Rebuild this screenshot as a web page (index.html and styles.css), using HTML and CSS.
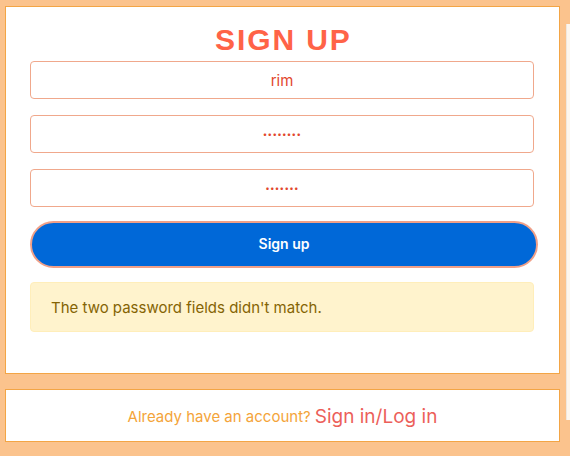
FILE: index.html
```html
<!DOCTYPE html>
<html>
<head>
<meta charset="utf-8">
<link rel="stylesheet" href="styles.css">
</head>
<body>
<div class="page">
  <main class="column">
    <section class="card signup">
      <h1 class="title">SIGN UP</h1>
      <form class="form">
        <div class="field">rim</div>
        <div class="field dots">••••••••</div>
        <div class="field dots">•••••••</div>
        <button type="button" class="btn">Sign up</button>
        <div class="alert">The two password fields didn't match.</div>
      </form>
    </section>
    <section class="card footer">
      <span class="ask">Already have an account?</span>
      <a class="link">Sign in/Log in</a>
    </section>
  </main>
  <aside class="side"></aside>
</div>
</body>
</html>
```

FILE: styles.css
```css
html, body {
  margin: 0;
  padding: 0;
  background: #fbc38d;
  font-family: Inter, "Noto Sans", sans-serif;
  overflow: hidden;
}

.page {
  display: flex;
  gap: 6px;
  padding: 6px 0 0 5px;
  height: 456px;
  box-sizing: border-box;
}

.column {
  width: 555px;
  flex: none;
  display: flex;
  flex-direction: column;
  gap: 15px;
}

.card {
  background: #fff;
  border: 1px solid #f3a545;
  box-sizing: border-box;
}

.signup {
  height: 368px;
  padding: 16px 24px 0 24px;
}

.title {
  margin: 0 0 4px;
  text-align: center;
  font-family: "Liberation Sans", Arial, sans-serif;
  font-weight: 700;
  font-size: 30px;
  line-height: 34px;
  letter-spacing: 1.9px;
  text-indent: 1.9px;
  color: #ff6347;
}

.form {
  display: flex;
  flex-direction: column;
}

.field {
  width: 504px;
  height: 38px;
  box-sizing: border-box;
  border: 1px solid #f0a88c;
  border-radius: 4px;
  display: flex;
  align-items: center;
  justify-content: center;
  font-size: 15px;
  color: #e2472c;
  margin-bottom: 16px;
}

.dots {
  font-size: 8px;
  letter-spacing: 0.3px;
  color: #e2472c;
}

.btn {
  width: 508px;
  height: 47px;
  margin-top: -2px;
  box-sizing: border-box;
  border: 2px solid #f0a088;
  border-radius: 24px;
  background: #0068d8;
  color: #fff;
  font-family: Inter, "Noto Sans", sans-serif;
  font-size: 14px;
  font-weight: 600;
  padding: 0 0 3px;
}

.alert {
  margin-top: 14px;
  width: 504px;
  height: 50px;
  box-sizing: border-box;
  background: #fff3cd;
  border: 1px solid #ffeeba;
  border-radius: 4px;
  color: #856404;
  font-size: 15px;
  display: flex;
  align-items: center;
  padding-left: 20px;
}

.footer {
  height: 53px;
  display: flex;
  align-items: center;
  justify-content: center;
  gap: 4px;
  padding-top: 2px;
}

.ask {
  color: #f4a43a;
  font-size: 15px;
}

.link {
  color: #ec5f5a;
  font-size: 19px;
}

.side {
  flex: none;
  width: 10px;
  margin-top: 18px;
  height: 396px;
  background: #fdf6ee;
  border-left: 1px solid #efe7df;
}
```
